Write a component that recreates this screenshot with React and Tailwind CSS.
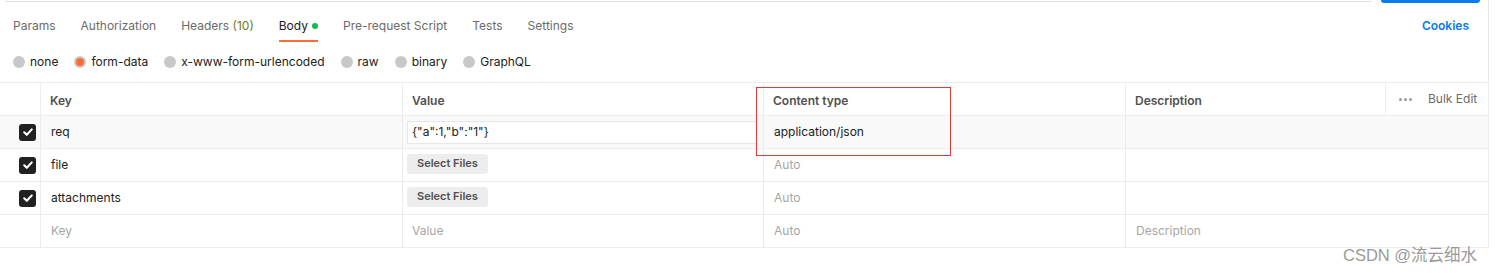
import React from "react";

const tabs = [
  { label: "Params" },
  { label: "Authorization" },
  { label: "Headers", count: "(10)" },
  { label: "Body", active: true },
  { label: "Pre-request Script" },
  { label: "Tests" },
  { label: "Settings" },
];

const radios = [
  { label: "none" },
  { label: "form-data", checked: true },
  { label: "x-www-form-urlencoded" },
  { label: "raw" },
  { label: "binary" },
  { label: "GraphQL" },
];

function Checkbox() {
  return (
    <div className="w-[17px] h-[17px] rounded-[3px] bg-[#212121] flex items-center justify-center">
      <svg width="12" height="12" viewBox="0 0 12 12" fill="none">
        <path d="M2.2 6.3 L4.8 8.8 L9.8 3.4" stroke="#fff" strokeWidth="2.1" strokeLinecap="round" strokeLinejoin="round" />
      </svg>
    </div>
  );
}

function SelectFiles() {
  return (
    <span className="inline-flex items-center mb-[3px] h-[20px] px-[10px] rounded-[3px] bg-[#ededed] text-[11px] font-semibold text-[#505050]">
      Select Files
    </span>
  );
}

export default function App() {
  const cell = "border-r border-[#ececec] flex items-center";
  return (
    <div className="w-[1495px] h-[273px] bg-white relative overflow-hidden text-[12px] text-[#6b6b6b]" style={{ fontFamily: "Inter, 'Noto Sans CJK SC', sans-serif" }}>
      {/* Top strip: URL input edge + Send button edge */}
      <div className="flex h-[3px] w-[1489px] border-r border-[#e6e6e6]">
        <div className="ml-[5px] w-[1367px] h-[2px] border-b border-l border-[#e0e0e0] rounded-bl-[4px]" />
        <div className="ml-[9px] w-[99px] h-[3px] bg-[#097bed] rounded-b-[4px]" />
      </div>

      {/* Tabs */}
      <div className="flex items-stretch h-[39px] w-[1489px] border-r border-[#e6e6e6] pl-[13px] pr-[19px]">
        {tabs.map((t) => (
          <div key={t.label} className="relative flex items-center pt-[6px] mr-[25px]">
            <span className={t.active ? "text-[#212121]" : "text-[#6b6b6b]"}>
              {t.label}
              {t.count && <span> </span>}
              {t.count && <span className="text-[#6f7d22]">{t.count}</span>}
            </span>
            {t.active && <span className="ml-[4px] w-[6px] h-[6px] rounded-full bg-[#0cbb52]" />}
            {t.active && <span className="absolute left-0 right-0 bottom-0 h-[2px] bg-[#ff6c37]" />}
          </div>
        ))}
        <div className="flex-1" />
        <div className="flex items-center pt-[6px] text-[#097bed] font-semibold">Cookies</div>
      </div>

      {/* Radios */}
      <div className="flex items-center h-[40px] w-[1489px] border-r border-[#e6e6e6] pl-[13px]">
        {radios.map((r) => (
          <div key={r.label} className="flex items-center mr-[16px]">
            <span className="w-[12px] h-[12px] rounded-full bg-[#c8c8c8] flex items-center justify-center mr-[5px]">
              {r.checked && <span className="w-[8px] h-[8px] rounded-full bg-[#ff6c37]" />}
            </span>
            <span className="text-[#212121]">{r.label}</span>
          </div>
        ))}
      </div>

      {/* Table */}
      <div className="w-[1489px] border-t border-r border-[#ececec] grid grid-cols-[41px_362px_361px_362px_1fr]">
        {/* header */}
        <div className={`${cell} h-[33px] border-b`} />
        <div className={`${cell} h-[33px] border-b pt-[3px] pl-[9px] font-semibold text-[#505050]`}>Key</div>
        <div className={`${cell} h-[33px] border-b pt-[3px] pl-[9px] font-semibold text-[#505050]`}>Value</div>
        <div className={`${cell} h-[33px] border-b pt-[3px] pl-[9px] font-semibold text-[#505050]`}>Content type</div>
        <div className="h-[33px] border-b border-[#ececec] flex">
          <div className="w-[260px] border-r border-[#ececec] flex items-center pt-[3px] pl-[9px] font-semibold text-[#505050]">Description</div>
          <div className="flex-1 flex items-center pl-[13px] gap-[16px] text-[#6b6b6b]">
            <span className="flex gap-[2px]">
              <span className="w-[3px] h-[3px] rounded-full bg-[#9a9a9a]" />
              <span className="w-[3px] h-[3px] rounded-full bg-[#9a9a9a]" />
              <span className="w-[3px] h-[3px] rounded-full bg-[#9a9a9a]" />
            </span>
            <span>Bulk Edit</span>
          </div>
        </div>

        {/* row req */}
        <div className={`${cell} h-[33px] border-b bg-[#f9f9f9] pl-[19px]`}><Checkbox /></div>
        <div className={`${cell} h-[33px] border-b bg-[#f9f9f9] pl-[10px] text-[#212121]`}>req</div>
        <div className={`${cell} h-[33px] border-b bg-[#f9f9f9] pl-[4px] pr-[6px]`}>
          <div className="w-full h-[23px] bg-white border border-[#e6e6e6] flex items-center pl-[4px] text-[#212121]">{'{"a":1,"b":"1"}'}</div>
        </div>
        <div className={`${cell} h-[33px] border-b bg-[#f9f9f9] pl-[10px] text-[#212121]`}>application/json</div>
        <div className="h-[33px] border-b border-[#ececec] bg-[#f9f9f9]" />

        {/* row file */}
        <div className={`${cell} h-[33px] border-b pl-[19px]`}><Checkbox /></div>
        <div className={`${cell} h-[33px] border-b pl-[10px] text-[#212121]`}>file</div>
        <div className={`${cell} h-[33px] border-b pl-[4px]`}><SelectFiles /></div>
        <div className={`${cell} h-[33px] border-b pl-[10px] text-[#a6a6a6]`}>Auto</div>
        <div className="h-[33px] border-b border-[#ececec]" />

        {/* row attachments */}
        <div className={`${cell} h-[33px] border-b pl-[19px]`}><Checkbox /></div>
        <div className={`${cell} h-[33px] border-b pl-[10px] text-[#212121]`}>attachments</div>
        <div className={`${cell} h-[33px] border-b pl-[4px]`}><SelectFiles /></div>
        <div className={`${cell} h-[33px] border-b pl-[10px] text-[#a6a6a6]`}>Auto</div>
        <div className="h-[33px] border-b border-[#ececec]" />

        {/* placeholder row */}
        <div className={`${cell} h-[33px] border-b`} />
        <div className={`${cell} h-[33px] border-b pl-[10px] text-[#a6a6a6]`}>Key</div>
        <div className={`${cell} h-[33px] border-b pl-[9px] text-[#a6a6a6]`}>Value</div>
        <div className={`${cell} h-[33px] border-b pl-[10px] text-[#a6a6a6]`}>Auto</div>
        <div className="h-[33px] border-b border-[#ececec] flex items-center pl-[10px] text-[#a6a6a6]">Description</div>
      </div>

      {/* annotation box */}
      <div className="absolute left-[756px] top-[87px] w-[195px] h-[69px] border border-[#e53935]" />

      {/* watermark */}
      <div className="absolute left-[1343px] top-[243px] text-[16.5px] text-[#9a9a9a]" style={{ fontFamily: "'Liberation Sans', 'Noto Sans CJK SC', sans-serif" }}>CSDN @流云细水</div>
    </div>
  );
}
